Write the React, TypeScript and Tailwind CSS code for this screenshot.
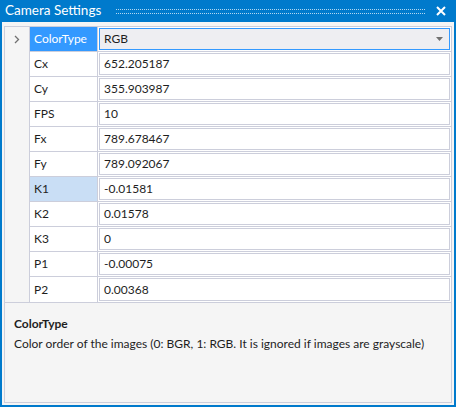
import React from "react";

type Row = { name: string; value: string };

const rows: Row[] = [
  { name: "Cx", value: "652.205187" },
  { name: "Cy", value: "355.903987" },
  { name: "FPS", value: "10" },
  { name: "Fx", value: "789.678467" },
  { name: "Fy", value: "789.092067" },
  { name: "K1", value: "-0.01581" },
  { name: "K2", value: "0.01578" },
  { name: "K3", value: "0" },
  { name: "P1", value: "-0.00075" },
  { name: "P2", value: "0.00368" },
];

// Property grid tool window, VS-ish blue chrome.
export default function App() {
  return (
    <div
      className="flex h-[407px] w-[456px] flex-col bg-[#007ACC] px-[2px] pb-[2px] text-[12px] text-[#1E1E1E]"
      style={{ fontFamily: 'Lato, "Open Sans", sans-serif' }}
    >
      <TitleBar />
      <div className="flex min-h-0 flex-1 flex-col bg-[#F5F5F5] px-[2px] pb-[2px] pt-[4px]">
        <div className="flex min-h-0 flex-1 flex-col border border-[#CCCEDB]">
          <div className="flex border-b border-[#CCCEDB] bg-white">
            {/* gutter */}
            <div className="w-[25px] flex-none border-r border-[#CCCEDB] bg-[#F5F5F5]">
              <div className="flex h-[25px] items-center justify-center">
                <Chevron />
              </div>
            </div>
            <div className="flex-1">
              <div className="flex h-[25px] border-b border-[#CCCEDB]">
                <div className="flex w-[68px] flex-none items-center border-r border-[#CCCEDB] bg-[#3399FF] pl-[4px] text-white">
                  ColorType
                </div>
                <div className="flex-1 p-[1px]">
                  <div className="flex h-full items-center justify-between border border-[#3399FF] bg-[#EEEEF2] pl-[4px] pr-[6px]">
                    <span>RGB</span>
                    <svg width="7" height="4" viewBox="0 0 7 4">
                      <path d="M0 0h7L3.5 4z" fill="#717171" />
                    </svg>
                  </div>
                </div>
              </div>
              {rows.map((r, i) => (
                <div
                  key={r.name}
                  className={`flex h-[25px] ${i < rows.length - 1 ? "border-b border-[#CCCEDB]" : ""}`}
                >
                  <div
                    className={`flex w-[68px] flex-none items-center border-r border-[#CCCEDB] pl-[4px] ${
                      r.name === "K1" ? "bg-[#C9DEF5]" : ""
                    }`}
                  >
                    {r.name}
                  </div>
                  <div className="flex-1 p-[1px]">
                    <div className="flex h-full items-center border border-[#CCCEDB] bg-white pl-[4px]">
                      {r.value}
                    </div>
                  </div>
                </div>
              ))}
            </div>
          </div>
          <div className="flex-1 px-[9px] pt-[12px]">
            <div className="font-bold leading-[18px]">ColorType</div>
            <div className="mt-[3px] leading-[16px]">
              Color order of the images (0: BGR, 1: RGB. It is ignored if images are grayscale)
            </div>
          </div>
        </div>
      </div>
    </div>
  );
}

function TitleBar() {
  return (
    <div className="flex h-[22px] flex-none items-center pl-[3px] pr-[8px] text-white">
      <span className="text-[13.5px] leading-none">Camera Settings</span>
      <div className="ml-[15px] mr-[11px] h-[5px] flex-1 border-y border-dotted border-white/70" />
      <svg width="10" height="10" viewBox="0 0 10 10">
        <path d="M1 1l8 8M9 1L1 9" stroke="white" strokeWidth={2} />
      </svg>
    </div>
  );
}

function Chevron() {
  return (
    <svg width="6" height="9" viewBox="0 0 6 9">
      <path d="M1 1l3.5 3.5L1 8" fill="none" stroke="#717171" strokeWidth={1.3} />
    </svg>
  );
}
